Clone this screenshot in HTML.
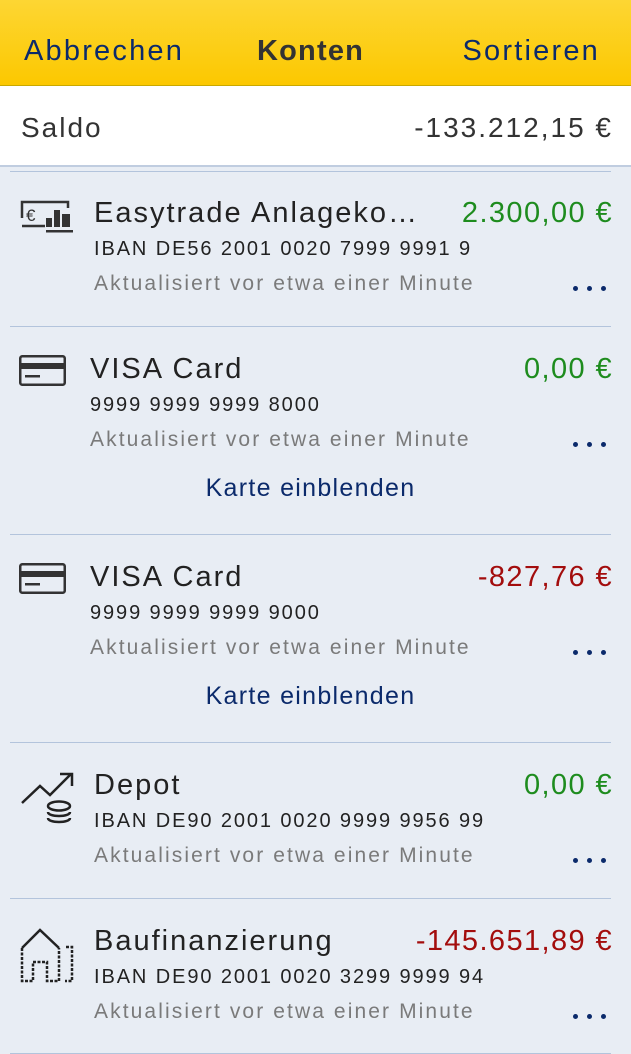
<!DOCTYPE html>
<html><head><meta charset="utf-8"><style>
*{margin:0;padding:0;box-sizing:border-box}
body{width:631px;height:1054px;overflow:hidden;background:#e8edf4;font-family:"Liberation Sans",sans-serif;position:relative}
.hdr{position:absolute;left:0;top:0;width:631px;height:86px;background:linear-gradient(#fdd633,#fcc800);border-bottom:1px solid #c9a800}
.t{position:absolute;white-space:nowrap;line-height:1}
.nav{font-size:29px;color:#0b2a6b;top:37px;letter-spacing:2.2px}
.saldo{position:absolute;top:86px;left:0;width:631px;height:81px;background:#fff;border-bottom:2px solid #c0cde0}
.sep{position:absolute;left:10px;width:601px;height:1px;background:#b3c4dc}
.ti{font-size:29px;color:#222;letter-spacing:2px}
.sm{font-size:20px;color:#222;letter-spacing:1.9px}
.gr{font-size:21px;color:#7a7a7a;letter-spacing:2.1px}
.g{color:#1e8c1e}.r{color:#a30d0d}
.amt{font-size:29px;right:18px;letter-spacing:1.4px}
.dots{position:absolute;right:22px;width:36px;height:6px}
.dots i{position:absolute;top:0;width:5px;height:5px;border-radius:50%;background:#0b2a6b}
.kb{font-size:25px;color:#0b2a6b;left:0;width:621px;text-align:center;letter-spacing:1.3px}
svg{position:absolute;overflow:visible}
</style></head><body>
<div class="hdr"></div>
<div class="t nav" style="left:24px">Abbrechen</div>
<div class="t nav" style="left:257px;color:#333;font-weight:bold;letter-spacing:1.2px">Konten</div>
<div class="t nav" style="right:31px">Sortieren</div>
<div class="saldo"></div>
<div class="t ti" style="left:21px;top:114px;font-size:28px;color:#333">Saldo</div>
<div class="t ti" style="right:18px;top:114px;font-size:28px;color:#333">-133.212,15 €</div>
<div class="sep" style="top:171px"></div>

<!-- row1 -->
<svg style="left:0;top:0" width="1" height="1"><path d="M22 218V202H68V208" fill="none" stroke="#333" stroke-width="2.5"/><path d="M22 226H45" stroke="#333" stroke-width="2.5"/><text x="26" y="221" font-size="17" fill="#333" font-family="Liberation Sans">€</text><rect x="46" y="218" width="6" height="9" fill="#333"/><rect x="54" y="210" width="6" height="17" fill="#333"/><rect x="62" y="214" width="8" height="13" fill="#333"/><rect x="46" y="230" width="27" height="2.5" fill="#333"/></svg>
<div class="t ti" style="left:94px;top:199px">Easytrade Anlageko…</div>
<div class="t amt g" style="top:199px">2.300,00 €</div>
<div class="t sm" style="left:94px;top:239px">IBAN DE56 2001 0020 7999 9991 9</div>
<div class="t gr" style="left:94px;top:273px">Aktualisiert vor etwa einer Minute</div>
<div class="dots" style="top:286px"><i style="left:0"></i><i style="left:14px"></i><i style="left:28px"></i></div>
<div class="sep" style="top:326px"></div>

<!-- row2 -->
<svg style="left:19px;top:355px" width="48" height="32" viewBox="0 0 48 32"><rect x="1.25" y="1.25" width="44.5" height="28.5" rx="2" fill="none" stroke="#333" stroke-width="2.5"/><rect x="1" y="8" width="45" height="6" fill="#333"/><rect x="6" y="20" width="15" height="2.5" fill="#333"/></svg>
<div class="t ti" style="left:90px;top:355px">VISA Card</div>
<div class="t amt g" style="top:355px">0,00 €</div>
<div class="t sm" style="left:90px;top:395px">9999 9999 9999 8000</div>
<div class="t gr" style="left:90px;top:429px">Aktualisiert vor etwa einer Minute</div>
<div class="dots" style="top:442px"><i style="left:0"></i><i style="left:14px"></i><i style="left:28px"></i></div>
<div class="t kb" style="top:476px">Karte einblenden</div>
<div class="sep" style="top:534px"></div>

<!-- row3 -->
<svg style="left:19px;top:563px" width="48" height="32" viewBox="0 0 48 32"><rect x="1.25" y="1.25" width="44.5" height="28.5" rx="2" fill="none" stroke="#333" stroke-width="2.5"/><rect x="1" y="8" width="45" height="6" fill="#333"/><rect x="6" y="20" width="15" height="2.5" fill="#333"/></svg>
<div class="t ti" style="left:90px;top:563px">VISA Card</div>
<div class="t amt r" style="top:563px">-827,76 €</div>
<div class="t sm" style="left:90px;top:603px">9999 9999 9999 9000</div>
<div class="t gr" style="left:90px;top:637px">Aktualisiert vor etwa einer Minute</div>
<div class="dots" style="top:650px"><i style="left:0"></i><i style="left:14px"></i><i style="left:28px"></i></div>
<div class="t kb" style="top:684px">Karte einblenden</div>
<div class="sep" style="top:742px"></div>

<!-- row4 -->
<svg style="left:0;top:0" width="1" height="1"><path d="M22 803L40 786L50 795L71 774M60 774H72V786" fill="none" stroke="#222" stroke-width="2.5"/><g fill="none" stroke="#222" stroke-width="2.5"><ellipse cx="59" cy="806" rx="11" ry="4.5"/><path d="M48 812c0 2.5 5 4 11 4s11-1.5 11-4M48 818c0 2.5 5 4 11 4s11-1.5 11-4"/></g></svg>
<div class="t ti" style="left:94px;top:771px">Depot</div>
<div class="t amt g" style="top:771px">0,00 €</div>
<div class="t sm" style="left:94px;top:811px">IBAN DE90 2001 0020 9999 9956 99</div>
<div class="t gr" style="left:94px;top:845px">Aktualisiert vor etwa einer Minute</div>
<div class="dots" style="top:858px"><i style="left:0"></i><i style="left:14px"></i><i style="left:28px"></i></div>
<div class="sep" style="top:898px"></div>

<!-- row5 -->
<svg style="left:0;top:0" width="1" height="1"><path d="M22 948L40 930L59 948" fill="none" stroke="#222" stroke-width="2.5"/><path d="M22 948V981H33V962H47V981H59V948" fill="none" stroke="#222" stroke-width="2.5" stroke-dasharray="3 1.5"/><path d="M66 947H72V981H65" fill="none" stroke="#222" stroke-width="2.5" stroke-dasharray="3 1.5"/></svg>
<div class="t ti" style="left:94px;top:927px">Baufinanzierung</div>
<div class="t amt r" style="top:927px">-145.651,89 €</div>
<div class="t sm" style="left:94px;top:967px">IBAN DE90 2001 0020 3299 9999 94</div>
<div class="t gr" style="left:94px;top:1001px">Aktualisiert vor etwa einer Minute</div>
<div class="dots" style="top:1014px"><i style="left:0"></i><i style="left:14px"></i><i style="left:28px"></i></div>
<div class="sep" style="top:1053px"></div>
</body></html>
